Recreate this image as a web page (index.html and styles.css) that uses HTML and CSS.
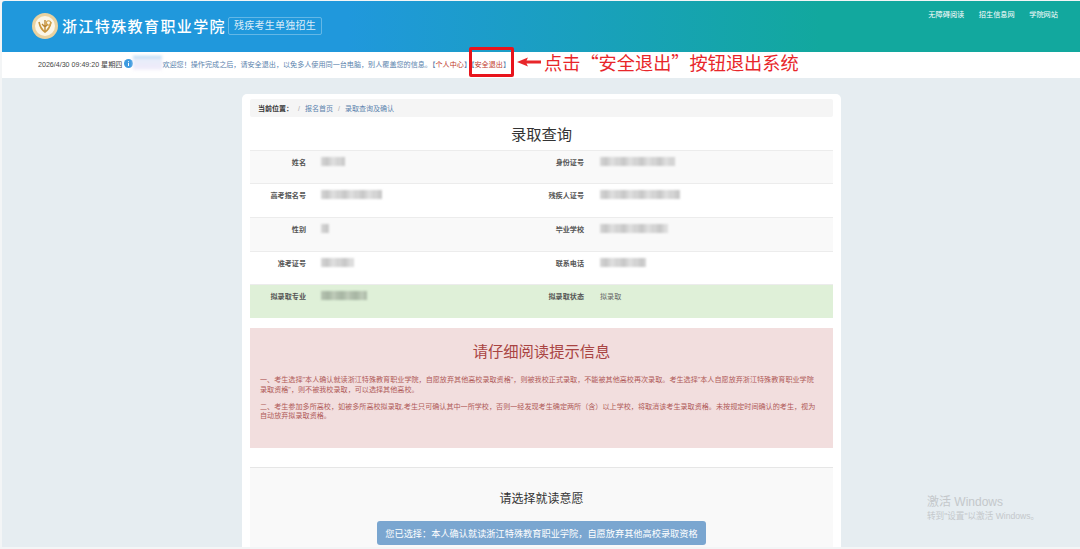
FILE: index.html
```html
<!DOCTYPE html>
<html>
	<head>
		<meta charset="UTF-8">
		<title>录取查询</title>
		<link rel="stylesheet" href="styles.css">
	</head>
	<body>
		<div class="shell">
			<header class="top">
				<div class="brand">
					<svg class="logo" width="26" height="26" viewBox="0 0 26 26">
						<circle cx="13" cy="13" r="13" fill="#e9d2a0"/>
						<circle cx="13" cy="13" r="10" fill="#fbf6e8"/>
						<path d="M7 9c1 5 3 8 6 10 3-2 5-5 6-10" fill="none" stroke="#c8963c" stroke-width="1.6"/>
						<path d="M13 18V7M10 11l3 3 3-3" fill="none" stroke="#b9822c" stroke-width="1.3"/>
						<circle cx="16.500" cy="10" r="2.200" fill="none" stroke="#d3a44e" stroke-width="1.100"/>
					</svg>
					<span class="school">浙江特殊教育职业学院</span>
					<span class="tag">残疾考生单独招生</span>
				</div>
				<nav class="links">
					<a>无障碍阅读</a>
					<a>招生信息网</a>
					<a>学院网站</a>
				</nav>
			</header>
			<div class="notice">
				<span class="clock">2026/4/30 09:49:20 星期四</span>
				<svg class="info" width="9" height="9" viewBox="0 0 9 9">
					<circle cx="4.500" cy="4.500" r="4.500" fill="#3d9be0"/>
					<path d="M4.500 2v.8M4.500 3.800V7" stroke="#fff" stroke-width="1"/>
				</svg>
				<span class="who"></span>
				<span class="hello">欢迎您！操作完成之后，请安全退出，以免多人使用同一台电脑，别人覆盖您的信息。【<b>个人中心</b>】【<b>安全退出</b>】</span>
				<div class="callout">
					<div class="redbox"></div>
					<svg class="arrow" width="24" height="10" viewBox="0 0 24 10">
						<path d="M0 5 11 0.500 9.500 3.600H24V6.400H9.500L11 9.500Z" fill="#e8262a"/>
					</svg>
					<span class="tip">点击“安全退出”按钮退出系统</span>
				</div>
			</div>
			<main class="card">
				<div class="crumb">
					<b>当前位置：</b>
					<i>/</i>
					<a>报名首页</a>
					<i>/</i>
					<a>录取查询及确认</a>
				</div>
				<h1>录取查询</h1>
				<div class="row odd">
					<div class="cell first"><label>姓名</label><span class="mask w24"></span></div>
					<div class="cell"><label>身份证号</label><span class="mask w75"></span></div>
				</div>
				<div class="row">
					<div class="cell first"><label>高考报名号</label><span class="mask w61"></span></div>
					<div class="cell"><label>残疾人证号</label><span class="mask w80"></span></div>
				</div>
				<div class="row odd">
					<div class="cell first"><label>性别</label><span class="mask w8"></span></div>
					<div class="cell"><label>毕业学校</label><span class="mask w68"></span></div>
				</div>
				<div class="row">
					<div class="cell first"><label>准考证号</label><span class="mask w33"></span></div>
					<div class="cell"><label>联系电话</label><span class="mask w46"></span></div>
				</div>
				<div class="row ok">
					<div class="cell first"><label>拟录取专业</label><span class="mask w46 dark"></span></div>
					<div class="cell"><label>拟录取状态</label><span class="val">拟录取</span></div>
				</div>
				<div class="alert">
					<h2>请仔细阅读提示信息</h2>
					<p>一、考生选择"本人确认就读浙江特殊教育职业学院，自愿放弃其他高校录取资格"，则被我校正式录取，不能被其他高校再次录取。考生选择"本人自愿放弃浙江特殊教育职业学院录取资格"，则不被我校录取，可以选择其他高校。</p>
					<p>二、考生参加多所高校，如被多所高校拟录取,考生只可确认其中一所学校，否则一经发现考生确定两所（含）以上学校，将取消该考生录取资格。未按规定时间确认的考生，视为自动放弃拟录取资格。</p>
				</div>
				<section class="choose">
					<h3>请选择就读意愿</h3>
					<button class="picked">您已选择：本人确认就读浙江特殊教育职业学院，自愿放弃其他高校录取资格</button>
				</section>
			</main>
		</div>
		<div class="activate">
			<div class="big">激活 Windows</div>
			<div class="small">转到"设置"以激活 Windows。</div>
		</div>
	</body>
</html>
```
FILE: styles.css
```css
*{
	margin: 0;
	padding: 0;
	box-sizing: border-box;
}
html,body{
	height: 549px;
	overflow: hidden;
	background: #f3f5f6;
	font-family: "Liberation Sans", "Noto Sans CJK SC", sans-serif;
}
.shell{
	height: 546px;
	margin: 1px 0 0 2px;
	background: #e6edf1;
	overflow: hidden;
}
.top{
	height: 51px;
	display: flex;
	justify-content: space-between;
	background: linear-gradient(to right, #2098dc 0, #2098dc 32%, #12a89e 76%);
	border-radius: 3px 0 0 0;
	color: #fff;
}
.brand{
	display: flex;
	align-items: center;
	padding: 0 0 2px 30px;
}
.logo{
	flex: none;
}
.school{
	margin-left: 4px;
	font-size: 15px;
	font-weight: 500;
	letter-spacing: 1.400px;
	white-space: nowrap;
}
.tag{
	margin-left: 2px;
	height: 18px;
	line-height: 16px;
	padding: 0 5px;
	border: 1px solid rgba(255,255,255,.3);
	border-radius: 2px;
	font-size: 10px;
	letter-spacing: .25px;
	color: rgba(255,255,255,.85);
	white-space: nowrap;
}
.links{
	display: flex;
	gap: 14.500px;
	padding: 9px 22px 0 0;
	font-size: 7.200px;
	line-height: 10px;
}
.notice{
	position: relative;
	height: 26px;
	display: flex;
	align-items: center;
	padding: 0 0 3px 36px;
	background: #fff;
	font-size: 7.100px;
	white-space: nowrap;
}
.clock{
	color: #444;
}
.info{
	margin-left: 2px;
	flex: none;
}
.who{
	width: 29px;
	height: 15px;
	background: linear-gradient(#9fcdf0 0, #e8eefa 20%, #eeeafa 80%, #fff 100%);
	filter: blur(1.500px);
}
.hello{
	color: #5b83ad;
}
.hello b{
	font-weight: 400;
	color: #c0392b;
}
.callout{
	position: absolute;
	left: 467px;
	top: -5px;
	height: 30px;
	display: flex;
	align-items: center;
}
.redbox{
	width: 45px;
	height: 30px;
	border: 3px solid #e8141c;
	border-radius: 2px;
}
.arrow{
	margin-left: 3px;
}
.tip{
	margin-left: 3px;
	font-family: "Noto Sans CJK SC", sans-serif;
	font-size: 18.200px;
	color: #e8262a;
}
.card{
	width: 599px;
	height: 600px;
	margin: 16px 0 0 240px;
	padding: 5px 8px 0;
	background: #fff;
	border-radius: 5px;
}
.crumb{
	height: 18px;
	display: flex;
	align-items: center;
	padding-left: 8px;
	gap: 5px;
	background: #f5f5f5;
	border-radius: 2px;
	font-size: 7px;
	color: #5b83ad;
}
.crumb b{
	color: #333;
}
.crumb i{
	font-style: normal;
	color: #aaa;
}
h1{
	height: 32.500px;
	line-height: 36px;
	text-align: center;
	font-size: 15.300px;
	font-weight: 400;
	color: #333;
}
.row{
	height: 33.700px;
	display: flex;
	padding-top: 7px;
	border-top: 1px solid #ececec;
	background: #fff;
	font-size: 7.100px;
	line-height: 10px;
}
.row.odd{
	background: #f9f9f9;
}
.row.ok{
	background: #dff0d8;
}
.cell{
	flex: 1;
	display: flex;
}
.cell.first{
	flex: none;
	width: 278px;
}
.cell label{
	width: 56px;
	margin-right: 15px;
	text-align: right;
	font-weight: 700;
	color: #555;
}
.cell:not(.first) label{
	margin-right: 16px;
}
.val{
	color: #666;
}
.mask{
	height: 9px;
	margin-top: -1px;
	background: repeating-linear-gradient(to right, #d8d8d8 0, #c6c6c6 6px, #e0e0e0 12px, #d0d0d0 18px);
	filter: blur(1.200px);
}
.mask.dark{
	background: repeating-linear-gradient(to right, #b7c4b2 0, #a6b5a2 7px, #c3cfbd 14px);
}
.w8{ width: 8px; }
.w24{ width: 24px; }
.w33{ width: 33px; }
.w46{ width: 46px; }
.w61{ width: 61px; }
.w68{ width: 68px; }
.w75{ width: 75px; }
.w80{ width: 80px; }
.alert{
	height: 120px;
	margin-top: 10px;
	padding: 0 10px;
	background: #f2dede;
	color: #a94442;
}
h2{
	height: 48px;
	line-height: 48px;
	text-align: center;
	font-size: 15.300px;
	font-weight: 400;
}
.alert p{
	margin-bottom: 7.300px;
	padding-right: 5px;
	font-size: 7.100px;
	line-height: 9.700px;
	color: #b05a58;
}
.choose{
	margin-top: 19px;
	height: 120px;
	padding-top: 22px;
	display: flex;
	flex-direction: column;
	align-items: center;
	border-top: 1px solid #e6e6e6;
	background: #f9f9f9;
}
h3{
	height: 31px;
	line-height: 18px;
	font-size: 12px;
	font-weight: 400;
	color: #333;
}
.picked{
	width: 329px;
	height: 24px;
	border: 0;
	border-radius: 3px;
	background: #7aa6d0;
	color: #fff;
	font-family: inherit;
	font-size: 9.200px;
	white-space: nowrap;
}
.activate{
	position: absolute;
	left: 927px;
	top: 495px;
	color: #c4c8cb;
}
.big{
	font-size: 12px;
	line-height: 14px;
}
.small{
	font-size: 8.600px;
	line-height: 14px;
}
```
